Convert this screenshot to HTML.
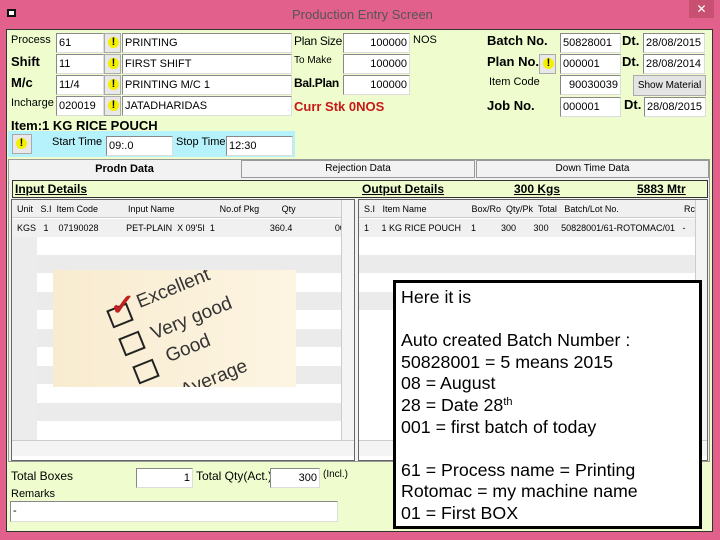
<!DOCTYPE html>
<html><head><style>
*{margin:0;padding:0;box-sizing:border-box}
body{width:720px;height:540px;background:#e2608c;font-family:"Liberation Sans",sans-serif;position:relative;overflow:hidden;font-size:11px;color:#000}
.a{position:absolute}
.tb{position:absolute;background:#fff;border:1px solid #888;border-right-color:#ddd;border-bottom-color:#ddd;font-size:11px;padding:3px 2px;white-space:nowrap;overflow:hidden;height:20px}
.r{text-align:right}
.btn{position:absolute;background:#e8e8e8;border:1px solid #aaa;width:17px;height:20px}
.btn:after{content:"";position:absolute;left:3px;top:3px;width:11px;height:11px;border-radius:50%;background:#f4f000}
.btn:before{content:"!";position:absolute;left:0;width:17px;text-align:center;top:2px;font-weight:bold;font-size:11px;z-index:2}
.lb{position:absolute;white-space:nowrap}
.bold{font-weight:bold;font-size:13px}
.row{position:absolute;height:18px}
</style></head><body>
<div class="a" style="left:0;top:0;width:720px;height:28px;background:#e2608c"></div>
<div class="a" style="left:7px;top:9px;width:9px;height:8px;border:2px solid #111;background:#fff"></div>
<div class="lb" style="left:292px;top:7px;font-size:13px;color:#555">Production Entry Screen</div>
<div class="a" style="left:689px;top:0;width:25px;height:18px;background:#c85070;color:#fff;text-align:center;font-size:12px;line-height:18px">✕</div>
<div class="a" style="left:6px;top:29px;width:707px;height:503px;background:#eefcce;border:1px solid #333"></div>

<div class="lb" style="left:11px;top:34px">Process</div>
<div class="lb bold" style="left:11px;top:54px">Shift</div>
<div class="lb bold" style="left:11px;top:75px">M/c</div>
<div class="lb" style="left:11px;top:97px">Incharge</div>
<div class="tb" style="left:56px;top:33px;width:48px">61</div>
<div class="tb" style="left:56px;top:54px;width:48px">11</div>
<div class="tb" style="left:56px;top:75px;width:48px">11/4</div>
<div class="tb" style="left:56px;top:96px;width:48px">020019</div>
<div class="btn" style="left:104px;top:33px"></div>
<div class="btn" style="left:104px;top:54px"></div>
<div class="btn" style="left:104px;top:75px"></div>
<div class="btn" style="left:104px;top:96px"></div>
<div class="tb" style="left:122px;top:33px;width:170px">PRINTING</div>
<div class="tb" style="left:122px;top:54px;width:170px">FIRST SHIFT</div>
<div class="tb" style="left:122px;top:75px;width:170px">PRINTING M/C 1</div>
<div class="tb" style="left:122px;top:96px;width:170px">JATADHARIDAS</div>
<div class="lb" style="left:294px;top:34px;font-size:12px;letter-spacing:-0.3px">Plan Size</div>
<div class="lb" style="left:294px;top:55px;font-size:10px">To Make</div>
<div class="lb bold" style="left:294px;top:76px;font-size:12px;letter-spacing:-0.3px">Bal.Plan</div>
<div class="lb bold" style="left:294px;top:99px;color:#c81818">Curr Stk 0NOS</div>
<div class="tb r" style="left:343px;top:33px;width:67px">100000</div>
<div class="tb r" style="left:343px;top:54px;width:67px">100000</div>
<div class="tb r" style="left:343px;top:75px;width:67px">100000</div>
<div class="lb" style="left:413px;top:34px">NOS</div>

<div class="lb bold" style="left:487px;top:33px">Batch No.</div>
<div class="lb bold" style="left:487px;top:54px">Plan No.</div>
<div class="btn" style="left:539px;top:54px"></div>
<div class="lb" style="left:489px;top:76px">Item Code</div>
<div class="lb bold" style="left:487px;top:98px">Job No.</div>
<div class="tb" style="left:560px;top:33px;width:61px">50828001</div>
<div class="tb" style="left:560px;top:54px;width:61px">000001</div>
<div class="tb r" style="left:560px;top:75px;width:61px">90030039</div>
<div class="tb" style="left:560px;top:97px;width:61px">000001</div>
<div class="lb bold" style="left:622px;top:33px">Dt.</div>
<div class="lb bold" style="left:622px;top:54px">Dt.</div>
<div class="lb bold" style="left:624px;top:97px">Dt.</div>
<div class="tb" style="left:643px;top:33px;width:62px">28/08/2015</div>
<div class="tb" style="left:643px;top:54px;width:62px">28/08/2014</div>
<div class="tb" style="left:644px;top:97px;width:62px">28/08/2015</div>
<div class="a" style="left:633px;top:75px;width:73px;height:21px;background:#e4e4e4;border:1px solid #aaa;text-align:center;line-height:19px;font-size:10px">Show Material</div>

<div class="lb bold" style="left:11px;top:118px">Item:1 KG RICE POUCH</div>
<div class="a" style="left:8px;top:131px;width:287px;height:26px;background:#b6f2fc"></div>
<div class="btn" style="left:12px;top:134px;width:20px"></div>
<div class="lb" style="left:52px;top:136px">Start Time</div>
<div class="tb" style="left:106px;top:136px;width:67px">09:.0</div>
<div class="lb" style="left:176px;top:136px">Stop Time</div>
<div class="tb" style="left:226px;top:136px;width:67px">12:30</div>

<div class="a" style="left:8px;top:159px;width:702px;height:303px;background:#f2f2f2;border:1px solid #999"></div>
<div class="a" style="left:9px;top:160px;width:231px;height:20px;background:#f2f2f2;text-align:center;font-weight:bold;line-height:18px">Prodn Data</div>
<div class="a" style="left:241px;top:160px;width:234px;height:18px;background:#f2f2f2;border:1px solid #999;text-align:center;font-size:10px;line-height:16px">Rejection Data</div>
<div class="a" style="left:476px;top:160px;width:233px;height:18px;background:#f2f2f2;border:1px solid #999;text-align:center;font-size:10px;line-height:16px">Down Time Data</div>
<div class="a" style="left:12px;top:180px;width:696px;height:18px;background:#eefcce;border:1px solid #333"></div>
<div class="lb bold" style="left:15px;top:182px;text-decoration:underline;font-size:12px">Input Details</div>
<div class="lb bold" style="left:362px;top:182px;text-decoration:underline;font-size:12px">Output Details</div>
<div class="lb bold" style="left:514px;top:182px;text-decoration:underline;font-size:12px">300 Kgs</div>
<div class="lb bold" style="left:637px;top:182px;text-decoration:underline;font-size:12px">5883 Mtr</div>

<div class="a" style="left:11px;top:199px;width:344px;height:262px;background:#fff;border:1px solid #666;overflow:hidden">
 <div class="row" style="top:0;width:330px;background:#f0f0f0;border-bottom:1px solid #ccc;font-size:9px;line-height:18px;white-space:pre">  Unit   S.I  Item Code            Input Name                  No.of Pkg         Qty                    Batch I</div>
 <div class="row" style="top:19px;width:330px;background:#f0f0f0;font-size:9px;line-height:18px;white-space:pre">  KGS   1    07190028           PET-PLAIN  X 09'5I  1                      360.4                 00189</div>
 <div class="row" style="top:55px;width:330px;background:#ebebeb"></div>
 <div class="row" style="top:92px;width:330px;background:#ebebeb"></div>
 <div class="row" style="top:129px;width:330px;background:#ebebeb"></div>
 <div class="row" style="top:166px;width:330px;background:#ebebeb"></div>
 <div class="row" style="top:203px;width:330px;background:#ebebeb"></div>
 <div class="a" style="left:0;top:37px;width:25px;height:203px;background:#ececec"></div>
 <div class="a" style="left:329px;top:0;width:13px;height:240px;background:#f4f4f4;border-left:1px solid #ccc"></div>
 <div class="a" style="left:0;top:240px;width:342px;height:16px;background:#f4f4f4;border-top:1px solid #ccc"></div>
</div>
<div class="a" style="left:53px;top:270px;width:243px;height:117px;background:linear-gradient(90deg,#f8ebd0,#fdf5e2);overflow:hidden">
 <div class="lb" style="left:82px;top:8px;font-size:19px;color:#333;transform:rotate(-22deg)">Excellent</div>
 <div class="lb" style="left:96px;top:38px;font-size:19px;color:#333;transform:rotate(-22deg)">Very good</div>
 <div class="lb" style="left:112px;top:68px;font-size:19px;color:#333;transform:rotate(-22deg)">Good</div>
 <div class="lb" style="left:126px;top:98px;font-size:19px;color:#333;transform:rotate(-22deg)">Average</div>
 <div class="a" style="left:56px;top:36px;width:22px;height:19px;border:2px solid #222;transform:rotate(-22deg)"></div>
 <div class="a" style="left:68px;top:64px;width:22px;height:19px;border:2px solid #222;transform:rotate(-22deg)"></div>
 <div class="a" style="left:82px;top:92px;width:22px;height:19px;border:2px solid #222;transform:rotate(-22deg)"></div>
 <div class="lb" style="left:57px;top:18px;font-size:30px;color:#c02020;font-weight:bold">✓</div>
</div>

<div class="a" style="left:358px;top:199px;width:350px;height:262px;background:#fff;border:1px solid #666;overflow:hidden">
 <div class="row" style="top:0;width:336px;background:#f0f0f0;border-bottom:1px solid #ccc;font-size:9px;line-height:18px;white-space:pre">  S.I   Item Name                  Box/Ro  Qty/Pk  Total   Batch/Lot No.                          Rc</div>
 <div class="row" style="top:19px;width:336px;background:#f0f0f0;font-size:9px;line-height:18px;white-space:pre">  1     1 KG RICE POUCH    1          300       300     50828001/61-ROTOMAC/01   -</div>
 <div class="row" style="top:55px;width:336px;background:#ebebeb"></div>
 <div class="row" style="top:92px;width:336px;background:#ebebeb"></div>
 <div class="a" style="left:336px;top:0;width:13px;height:240px;background:#f4f4f4;border-left:1px solid #ccc"></div>
 <div class="a" style="left:0;top:240px;width:348px;height:16px;background:#f4f4f4;border-top:1px solid #ccc"></div>
</div>

<div class="lb" style="left:11px;top:469px;font-size:12px">Total Boxes</div>
<div class="tb r" style="left:136px;top:468px;width:57px">1</div>
<div class="lb" style="left:196px;top:469px;font-size:12px">Total Qty(Act.)</div>
<div class="tb r" style="left:270px;top:468px;width:50px">300</div>
<div class="lb" style="left:323px;top:469px;font-size:10px">(Incl.)</div>
<div class="lb" style="left:11px;top:488px">Remarks</div>
<div class="tb" style="left:10px;top:501px;width:328px;height:21px">-</div>

<div class="a" style="left:393px;top:280px;width:309px;height:249px;background:#fff;border:3px solid #000;padding:4px 5px;font-size:17.8px;line-height:21.6px;white-space:nowrap">
Here it is<br><br>Auto created Batch Number :<br>50828001 = 5 means 2015<br>08 = August<br>28 = Date 28<sup style="font-size:11px;line-height:0;vertical-align:6px">th</sup><br>001 = first batch of today<br><br>61 = Process name = Printing<br>Rotomac = my machine name<br>01 = First BOX
</div>
</body></html>
